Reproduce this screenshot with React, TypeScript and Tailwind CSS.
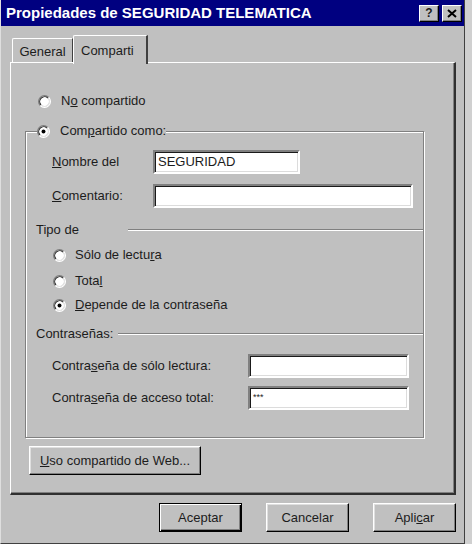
import React from "react";

const font = "font-['Liberation_Sans',Arial,sans-serif]";

const Radio: React.FC<{ checked?: boolean }> = ({ checked }) => (
  <svg width="13" height="13" viewBox="0 0 12 12" className="shrink-0">
    <circle cx="6" cy="6" r="5" fill="#fff" />
    <path d="M2.11 9.89 A5.5 5.5 0 0 1 9.89 2.11" fill="none" stroke="#808080" strokeWidth="1" />
    <path d="M2.82 9.18 A4.5 4.5 0 0 1 9.18 2.82" fill="none" stroke="#202020" strokeWidth="1" />
    <path d="M2.11 9.89 A5.5 5.5 0 0 0 9.89 2.11" fill="none" stroke="#fff" strokeWidth="1" />
    <path d="M2.82 9.18 A4.5 4.5 0 0 0 9.18 2.82" fill="none" stroke="#dcdcdc" strokeWidth="1" />
    {checked && <circle cx="6" cy="6" r="1.8" fill="#000" />}
  </svg>
);

const Field: React.FC<{ width: string; value?: string; small?: boolean }> = ({ width, value, small }) => (
  <div
    className={`${width} h-[24px] bg-white border-2 border-t-[#808080] border-l-[#808080] border-b-white border-r-white shadow-[inset_1px_1px_0_#1a1a1a,inset_-1px_-1px_0_#dcdcdc] flex items-center pl-[3px] ${
      small ? "text-[9px] items-start pt-[3px]" : "text-[13px]"
    }`}
  >
    {value}
  </div>
);

const Button: React.FC<{ width: string; children: React.ReactNode; isDefault?: boolean }> = ({
  width,
  children,
  isDefault,
}) => (
  <div
    className={`${width} h-[29px] flex items-center justify-center text-[13px] bg-[#c0c0c0] ${
      isDefault
        ? "border border-black shadow-[inset_1px_1px_0_#fff,inset_-1px_-1px_0_#000,inset_-2px_-2px_0_#808080]"
        : "border-t border-l border-t-white border-l-white border-b border-r border-b-black border-r-black shadow-[inset_-1px_-1px_0_#808080,inset_1px_1px_0_#dfdfdf]"
    }`}
  >
    {children}
  </div>
);

const Separator: React.FC<{ label: React.ReactNode; labelWidth: string }> = ({ label, labelWidth }) => (
  <div className="flex items-center h-[16px] pl-[10px]">
    <span className={`${labelWidth} shrink-0 text-[13px]`}>{label}</span>
    <div className="flex-1 h-[2px] border-t border-t-[#808080] border-b border-b-white" />
  </div>
);

export default function App() {
  return (
    <div className={`w-[472px] h-[544px] bg-[#d0d0d0] flex ${font} text-[#1c1c1c]`}>
      <div className="w-[465px] h-[544px] bg-[#c0c0c0] border-l border-l-[#dfdfdf] border-r border-r-[#404040] border-b border-b-[#404040] flex flex-col">
        {/* title bar */}
        <div className="h-[26px] bg-[#000080] flex items-center justify-between pl-[5px] pr-[2px]">
          <span className="text-white font-bold text-[15px]">
            Propiedades de SEGURIDAD TELEMATICA
          </span>
          <div className="flex gap-[3px]">
            <div className="w-[20px] h-[17px] bg-[#c0c0c0] border-t border-l border-white border-b border-r border-b-black border-r-black shadow-[inset_-1px_-1px_0_#808080] flex items-center justify-center text-[12px] font-bold leading-none">
              ?
            </div>
            <div className="w-[20px] h-[17px] bg-[#c0c0c0] border-t border-l border-white border-b border-r border-b-black border-r-black shadow-[inset_-1px_-1px_0_#808080] flex items-center justify-center">
              <svg width="10" height="9" viewBox="0 0 10 9">
                <path d="M1 1 L9 8 M9 1 L1 8" stroke="#000" strokeWidth="2" />
              </svg>
            </div>
          </div>
        </div>

        <div className="pl-[9px] pt-[9px]">
          {/* tabs */}
          <div className="flex items-end h-[27px]">
            <div className="ml-[2px] w-[61px] h-[24px] border-t border-l border-t-white border-l-white border-r border-r-[#404040] rounded-tl-[2px] flex items-center justify-center text-[13px] pt-[2px]">
              General
            </div>
            <div className="relative z-10 -mb-[2px] w-[75px] h-[29px] bg-[#c0c0c0] border-t border-l border-t-white border-l-white border-r-2 border-r-[#404040] rounded-tl-[2px] flex items-start pl-[7px] pt-[5px] text-[13px]">
              Comparti
            </div>
          </div>

          {/* panel */}
          <div className="w-[446px] h-[433px] border-t border-l border-t-white border-l-white border-r-2 border-b-2 border-r-[#303030] border-b-[#303030] shadow-[inset_-1px_-1px_0_#808080] px-[14px] pt-[30px]">
            <div className="flex items-center h-[16px] pl-[13px] gap-[10px] text-[13px]">
              <Radio />
              <span>
                N<u>o</u> compartido
              </span>
            </div>

            <fieldset className="mt-[14px] w-[399px] border border-[#808080] shadow-[inset_1px_1px_0_#fff,1px_1px_0_#fff] pb-[27px]">
              <legend className="ml-[11px] h-[16px] flex items-center gap-[10px] bg-[#c0c0c0] text-[13px]">
                <Radio checked />
                <span>
                  Com<u>p</u>artido como:
                </span>
              </legend>

              <div className="flex items-center mt-[11px] pl-[26px] text-[13px]">
                <span className="w-[101px] shrink-0">
                  <u>N</u>ombre del
                </span>
                <Field width="w-[147px]" value="SEGURIDAD" />
              </div>
              <div className="flex items-center mt-[10px] pl-[26px] text-[13px]">
                <span className="w-[101px] shrink-0">
                  <u>C</u>omentario:
                </span>
                <Field width="w-[260px]" />
              </div>

              <div className="mt-[14px]">
                <Separator label="Tipo de" labelWidth="w-[92px]" />
              </div>

              <div className="flex flex-col pl-[27px] text-[13px]">
                <div className="flex items-center h-[16px] gap-[9px] mt-[9px]">
                  <Radio />
                  <span>
                    Sólo de lectu<u>r</u>a
                  </span>
                </div>
                <div className="flex items-center h-[16px] gap-[9px] mt-[10px]">
                  <Radio />
                  <span>
                    Tota<u>l</u>
                  </span>
                </div>
                <div className="flex items-center h-[16px] gap-[9px] mt-[8px]">
                  <Radio checked />
                  <span>
                    <u>D</u>epende de la contraseña
                  </span>
                </div>
              </div>

              <div className="mt-[13px]">
                <Separator label="Contraseñas:" labelWidth="w-[82px]" />
              </div>

              <div className="flex items-center mt-[12px] pl-[26px] text-[13px]">
                <span className="w-[196px] shrink-0">
                  Contra<u>s</u>eña de sólo lectura:
                </span>
                <Field width="w-[161px]" />
              </div>
              <div className="flex items-center mt-[8px] pl-[26px] text-[13px]">
                <span className="w-[196px] shrink-0">
                  Contra<u>s</u>eña de acceso total:
                </span>
                <Field width="w-[161px]" value="***" small />
              </div>
            </fieldset>

            <div className="mt-[8px] ml-[4px]">
              <Button width="w-[172px]">
                <span>
                  <u>U</u>so compartido de Web...
                </span>
              </Button>
            </div>
          </div>

          {/* dialog buttons */}
          <div className="flex justify-end w-[446px] mt-[8px] gap-[24px]">
            <Button width="w-[83px]" isDefault>
              Aceptar
            </Button>
            <Button width="w-[83px]">Cancelar</Button>
            <Button width="w-[83px]">
              <span>
                Apli<u>c</u>ar
              </span>
            </Button>
          </div>
        </div>
      </div>
    </div>
  );
}
